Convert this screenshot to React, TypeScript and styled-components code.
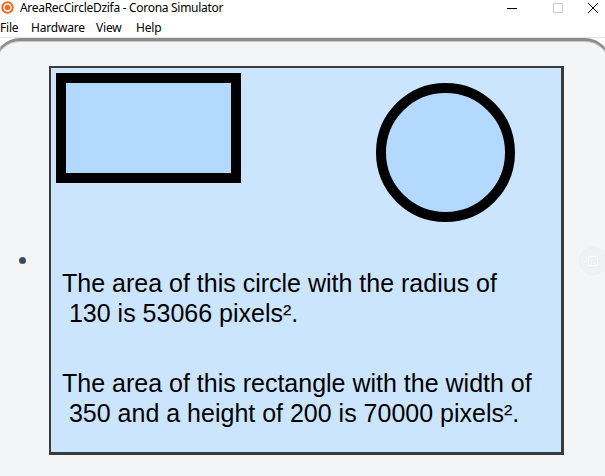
import React from "react";
import styled, { createGlobalStyle } from "styled-components";

const Global = createGlobalStyle`
  html, body { margin: 0; padding: 0; background: #ffffff; overflow: hidden; }
  body { width: 605px; height: 476px; }
  #root { width: 605px; height: 476px; }
`;

const Window = styled.div`
  width: 605px;
  height: 476px;
  display: flex;
  flex-direction: column;
  overflow: hidden;
  background: #ffffff;
  font-family: "Noto Sans", "Open Sans", sans-serif;
`;

const TitleBar = styled.div`
  height: 15px;
  display: flex;
  align-items: center;
`;

const AppIcon = styled.svg`
  width: 13px;
  height: 13px;
  margin: 0 6px 0 1px;
  flex: none;
`;

const Title = styled.span`
  font-size: 12px;
  color: #000;
  line-height: 15px;
  letter-spacing: -0.3px;
`;

const Controls = styled.div`
  margin-left: auto;
  display: flex;
  align-items: center;
  height: 15px;
`;

const Ctrl = styled.div<{ $w: number }>`
  width: ${(p) => p.$w}px;
  height: 15px;
  display: flex;
  align-items: center;
  justify-content: center;
`;

const MenuBar = styled.div`
  height: 22px;
  display: flex;
  align-items: center;
  border-bottom: 1px solid #e4e4e4;
`;

const MenuItem = styled.span<{ $w: number }>`
  width: ${(p) => p.$w}px;
  font-size: 12px;
  color: #000;
  line-height: 20px;
  padding-top: 3px;
  letter-spacing: -0.2px;
`;

const Device = styled.div`
  flex: 1;
  margin: 0 -6px -30px -6px;
  border-top: 3px solid #8c8c8c;
  border-left: 2px solid #9a9a9a;
  border-right: 2px solid #9a9a9a;
  border-bottom: 2px solid #9a9a9a;
  border-radius: 26px;
  background: #f4f5f7;
  box-shadow: inset 0 1px 0 #c8c8c8;
  position: relative;
  display: flex;
  align-items: flex-start;
  padding: 25px 0 0 53px;
`;

const Camera = styled.div`
  position: absolute;
  left: 24px;
  top: 217px;
  width: 5px;
  height: 5px;
  border-radius: 50%;
  background: #2c4a6a;
  box-shadow: 0 0 0 1px #555;
`;

const HomeButton = styled.div`
  position: absolute;
  left: 584px;
  top: 207px;
  width: 26px;
  height: 26px;
  border-radius: 50%;
  background: #f0f1f3;
  box-shadow: 0 0 2px #e0e0e0;
  display: flex;
  align-items: center;
  justify-content: center;
  &::after {
    content: "";
    width: 8px;
    height: 8px;
    border: 1px solid #fff;
    border-radius: 2px;
  }
`;

const Screen = styled.div`
  width: 510px;
  height: 384px;
  border: 2px solid #3a3a3a;
  border-right-width: 3px;
  border-bottom-width: 3px;
  background: #cce5fe;
  display: flex;
  flex-direction: column;
  font-family: "Liberation Sans", Arial, sans-serif;
  color: #000;
`;

const ShapesRow = styled.div`
  display: flex;
  align-items: flex-start;
`;

const RectShape = styled.div`
  width: 165px;
  height: 90px;
  border: 10px solid #000;
  background: #b3dafe;
  margin: 5px 0 0 5px;
`;

const CircleShape = styled.div`
  width: 119px;
  height: 119px;
  border: 10px solid #000;
  border-radius: 50%;
  background: #b3dafe;
  margin: 15px 0 0 135px;
`;

const Para = styled.p<{ $top: number }>`
  margin: ${(p) => p.$top}px 0 0 11px;
  font-size: 25px;
  line-height: 30px;
  white-space: pre;
`;

export default function App() {
  return (
    <>
      <Global />
      <Window>
        <TitleBar>
          <AppIcon viewBox="0 0 13 13">
            <circle cx="6.5" cy="6.5" r="6.2" fill="#f26a21" />
            <circle cx="6.5" cy="6.5" r="4.2" fill="#fff" />
            <circle cx="6.5" cy="6.5" r="2.8" fill="#f26a21" />
          </AppIcon>
          <Title>AreaRecCircleDzifa - Corona Simulator</Title>
          <Controls>
            <Ctrl $w={46}>
              <svg width="10" height="10" viewBox="0 0 10 10">
                <line x1="0" y1="5.5" x2="10" y2="5.5" stroke="#000" strokeWidth="1" />
              </svg>
            </Ctrl>
            <Ctrl $w={46}>
              <svg width="10" height="10" viewBox="0 0 10 10">
                <rect x="0.5" y="0.5" width="9" height="9" fill="none" stroke="#cccccc" strokeWidth="1" />
              </svg>
            </Ctrl>
            <Ctrl $w={24}>
              <svg width="10" height="10" viewBox="0 0 10 10">
                <path d="M0 0 L10 10 M10 0 L0 10" stroke="#000" strokeWidth="1" />
              </svg>
            </Ctrl>
          </Controls>
        </TitleBar>
        <MenuBar>
          <MenuItem $w={31}>File</MenuItem>
          <MenuItem $w={65}>Hardware</MenuItem>
          <MenuItem $w={40}>View</MenuItem>
          <MenuItem $w={40}>Help</MenuItem>
        </MenuBar>
        <Device>
          <Camera />
          <HomeButton />
          <Screen>
            <ShapesRow>
              <RectShape />
              <CircleShape />
            </ShapesRow>
            <Para $top={46}>{"The area of this circle with the radius of\n 130 is 53066 pixels²."}</Para>
            <Para $top={40}>{"The area of this rectangle with the width of\n 350 and a height of 200 is 70000 pixels²."}</Para>
          </Screen>
        </Device>
      </Window>
    </>
  );
}
